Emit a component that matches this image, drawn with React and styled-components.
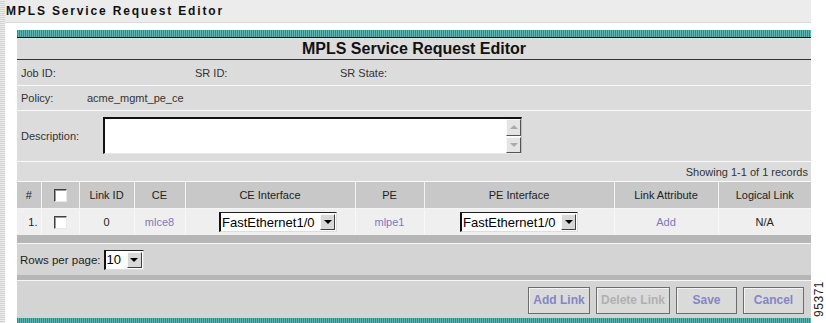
import React from 'react'
import styled, {createGlobalStyle} from 'styled-components'

const GlobalStyle = createGlobalStyle`
  html, body {
    margin: 0;
    padding: 0;
    background: #fff;
    font-family: "Liberation Sans", Arial, sans-serif;
  }
`

const linkColor = '#7b7bb8'
const rowGray = '#dcdcdc'
const lowGray = '#d4d4d4'

const Page = styled.div`
  display: flex;
  width: 826px;
  height: 323px;
  overflow: hidden;
`

const Stripe = styled.div`
  width: 5px;
  flex: none;
  background: repeating-linear-gradient(180deg, #ececec 0 1px, #d2d2d2 1px 2px);
`

const Main = styled.div`
  flex: 1;
  display: flex;
  flex-direction: column;
  min-width: 0;
`

const TopBar = styled.div`
  height: 22px;
  background: #ececec;
  border-bottom: 1px solid #d3dbdb;
  display: flex;
  align-items: center;
  padding-left: 1px;
  font-size: 12px;
  font-weight: bold;
  letter-spacing: 1.85px;
  color: #111;
`

const Panel = styled.div`
  margin: 7px 0 0 12px;
  flex: 1;
  display: flex;
  flex-direction: column;
  font-size: 11px;
  color: #333;
`

const TealBar = styled.div`
  height: ${({h}) => h}px;
  flex: none;
  background: repeating-linear-gradient(90deg, #2e8c8c 0 1px, #5fb3b3 1px 2px);
`

const TitleRow = styled.div`
  height: 21px;
  background: ${rowGray};
  border-top: 1px solid #111;
  border-bottom: 1px solid #333;
  box-shadow: 0 1px 0 #f0f0f0;
  display: flex;
  align-items: center;
  justify-content: center;
  font-size: 16px;
  font-weight: bold;
  color: #111;
`

const InfoRow = styled.div`
  height: ${({h}) => h || 24}px;
  box-sizing: border-box;
  background: ${rowGray};
  border-bottom: 1px solid #fafafa;
  display: grid;
  grid-template-columns: ${({cols}) => cols};
  align-items: ${({top}) => top ? 'start' : 'center'};
  padding: ${({top}) => top ? '6px 0 0 4px' : '0 0 0 4px'};
`

const DescLabel = styled.span`
  line-height: 38px;
`

const TextArea = styled.div`
  width: 419px;
  height: 37px;
  box-sizing: border-box;
  background: #fff;
  border-top: 2px solid #111;
  border-left: 2px solid #111;
  border-right: 1px solid #bbb;
  border-bottom: 1px solid #e8e8e8;
  display: flex;
  justify-content: flex-end;
  align-items: stretch;
`

const ScrollCol = styled.div`
  width: 15px;
  display: flex;
  flex-direction: column;
  gap: 1px;
  background: #fff;
`

const ScrollBtn = styled.div`
  flex: 1;
  background: #e4e4e4;
  border: 1px solid;
  border-color: #fafafa #555 #555 #fafafa;
  display: flex;
  align-items: center;
  justify-content: center;
`

const Arrow = styled.span`
  width: 0;
  height: 0;
  border-left: 4px solid transparent;
  border-right: 4px solid transparent;
  ${({up, color}) => up
    ? `border-bottom: 4px solid ${color};`
    : `border-top: 4px solid ${color};`}
`

const ShowingRow = styled.div`
  height: 19px;
  background: ${rowGray};
  border-bottom: 1px solid #fafafa;
  display: flex;
  align-items: center;
  justify-content: flex-end;
  padding-right: 3px;
`

const Table = styled.table`
  border-collapse: collapse;
  width: 100%;
  table-layout: fixed;
`

const HeadCell = styled.th`
  height: 26px;
  padding: 0;
  background: #c8c8c8;
  font-weight: normal;
  color: #222;
  text-align: center;
  border-left: 1px solid #f4f4f4;
  border-bottom: 1px solid #f4f4f4;
  &:first-child { border-left: none; }
`

const Cell = styled.td`
  height: 26px;
  padding: 0 ${({pr}) => pr || 0}px 0 ${({pl}) => pl || 0}px;
  background: #efefef;
  text-align: ${({align}) => align || 'center'};
  color: ${({link}) => link ? linkColor : '#222'};
  border-left: 1px solid #f8f8f8;
  &:first-child { border-left: none; }
`

const Check = styled.span`
  display: inline-block;
  width: 11px;
  height: 11px;
  background: #fff;
  border: 1px solid;
  border-color: #404040 #e8e8e8 #e8e8e8 #404040;
  box-shadow: inset 1px 1px 0 #999;
  vertical-align: middle;
`

const Select = styled.div`
  display: inline-flex;
  align-items: stretch;
  width: ${({w}) => w}px;
  height: 20px;
  box-sizing: border-box;
  background: #fff;
  border-top: 1px solid #222;
  border-left: 2px solid #111;
  border-right: 1px solid #ddd;
  border-bottom: 1px solid #ddd;
  vertical-align: middle;
  font-size: 13px;
  color: #000;
`

const SelectText = styled.span`
  flex: 1;
  display: flex;
  align-items: center;
  padding-left: 1px;
  text-align: left;
  white-space: nowrap;
`

const DropBtn = styled.span`
  width: 15px;
  flex: none;
  margin: 1px;
  box-sizing: border-box;
  background: #d8d8d8;
  border: 1px solid;
  border-color: #fafafa #404040 #404040 #fafafa;
  display: flex;
  align-items: center;
  justify-content: center;
`

const GrayBar = styled.div`
  height: ${({h}) => h}px;
  background: #b6b6b6;
  border-bottom: 1px solid #f6f6f6;
`

const PagerRow = styled.div`
  height: 31px;
  background: ${lowGray};
  display: flex;
  align-items: center;
  gap: 3px;
  padding-left: 3px;
  font-size: 11.5px;
  color: #222;
`

const ButtonRow = styled.div`
  flex: 1;
  background: ${lowGray};
  display: flex;
  align-items: center;
  justify-content: flex-end;
  gap: 6px;
  padding: 1px 7px 0 0;
`

const Button = styled.div`
  width: ${({w}) => w}px;
  height: 27px;
  box-sizing: border-box;
  background: #dadada;
  border: 1px solid #6c6c6c;
  box-shadow: inset 1px 1px 0 #f4f4f4;
  display: flex;
  align-items: center;
  justify-content: center;
  font-size: 12px;
  font-weight: bold;
  color: ${({disabled}) => disabled ? '#b0b0b0' : '#8585c6'};
`

const Gutter = styled.div`
  width: 15px;
  flex: none;
  display: flex;
  flex-direction: column;
  justify-content: flex-end;
  align-items: center;
  padding-bottom: 6px;
`

const FigLabel = styled.span`
  writing-mode: vertical-rl;
  transform: rotate(180deg);
  font-size: 12px;
  color: #222;
  letter-spacing: 0.5px;
`

const Dropdown = ({value, width}) =>
  <Select w={width}>
    <SelectText>{value}</SelectText>
    <DropBtn><Arrow color="#000"/></DropBtn>
  </Select>

const columns = [
  {label: '#', w: 24},
  {label: <Check/>, w: 38},
  {label: 'Link ID', w: 55},
  {label: 'CE', w: 51},
  {label: 'CE Interface', w: 170},
  {label: 'PE', w: 69},
  {label: 'PE Interface', w: 190},
  {label: 'Link Attribute', w: 104},
  {label: 'Logical Link', w: 93}
]

const buttons = [
  {label: 'Add Link', w: 62},
  {label: 'Delete Link', w: 74, disabled: true},
  {label: 'Save', w: 61},
  {label: 'Cancel', w: 61}
]

const App = () =>
  <Page>
    <GlobalStyle/>
    <Stripe/>
    <Main>
      <TopBar>MPLS Service Request Editor</TopBar>
      <Panel>
        <TealBar h={7}/>
        <TitleRow>MPLS Service Request Editor</TitleRow>
        <InfoRow cols="174px 145px auto" h={26}>
          <span>Job ID:</span>
          <span>SR ID:</span>
          <span>SR State:</span>
        </InfoRow>
        <InfoRow cols="66px auto" h={25}>
          <span>Policy:</span>
          <span>acme_mgmt_pe_ce</span>
        </InfoRow>
        <InfoRow cols="82px auto" h={51} top>
          <DescLabel>Description:</DescLabel>
          <TextArea>
            <ScrollCol>
              <ScrollBtn><Arrow up color="#aaa"/></ScrollBtn>
              <ScrollBtn><Arrow color="#aaa"/></ScrollBtn>
            </ScrollCol>
          </TextArea>
        </InfoRow>
        <ShowingRow>Showing 1-1 of 1 records</ShowingRow>
        <Table>
          <colgroup>
            {columns.map((c, i) => <col key={i} style={{width: c.w}}/>)}
          </colgroup>
          <thead>
            <tr>
              {columns.map((c, i) => <HeadCell key={i}>{c.label}</HeadCell>)}
            </tr>
          </thead>
          <tbody>
            <tr>
              <Cell align="right" pr={3}>1.</Cell>
              <Cell><Check/></Cell>
              <Cell>0</Cell>
              <Cell link>mlce8</Cell>
              <Cell pl={16}><Dropdown value="FastEthernet1/0" width={118}/></Cell>
              <Cell link>mlpe1</Cell>
              <Cell><Dropdown value="FastEthernet1/0" width={118}/></Cell>
              <Cell link>Add</Cell>
              <Cell>N/A</Cell>
            </tr>
          </tbody>
        </Table>
        <GrayBar h={8}/>
        <PagerRow>
          <span>Rows per page:</span>
          <Dropdown value="10" width={40}/>
        </PagerRow>
        <GrayBar h={5}/>
        <ButtonRow>
          {buttons.map(b =>
            <Button key={b.label} w={b.w} disabled={b.disabled}>{b.label}</Button>)}
        </ButtonRow>
        <TealBar h={5}/>
      </Panel>
    </Main>
    <Gutter>
      <FigLabel>95371</FigLabel>
    </Gutter>
  </Page>

export default App
